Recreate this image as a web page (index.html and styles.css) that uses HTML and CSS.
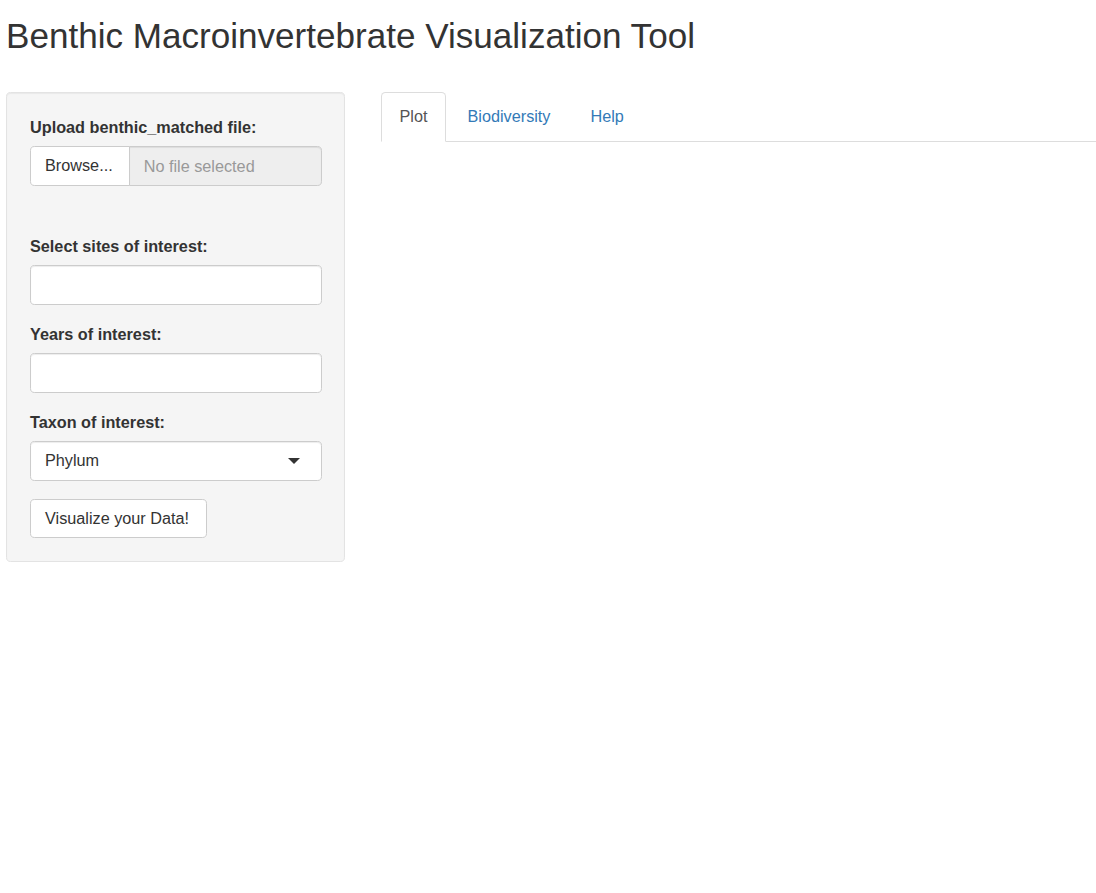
FILE: index.html
```html
<!DOCTYPE html>
<html lang="en">
<head>
<meta charset="utf-8">
<title>Benthic Macroinvertebrate Visualization Tool</title>
<link rel="stylesheet" href="styles.css">
</head>
<body>
<div class="page">
  <h2 class="title">Benthic Macroinvertebrate Visualization Tool</h2>
  <div class="layout">
    <form class="well">
      <div class="form-group file-group">
        <label class="control-label">Upload benthic_matched file:</label>
        <div class="input-group">
          <span class="btn btn-browse">Browse...</span>
          <input type="text" class="form-control file-name" placeholder="No file selected" readonly>
        </div>
      </div>
      <div class="form-group">
        <label class="control-label">Select sites of interest:</label>
        <input type="text" class="form-control">
      </div>
      <div class="form-group">
        <label class="control-label">Years of interest:</label>
        <input type="text" class="form-control">
      </div>
      <div class="form-group">
        <label class="control-label">Taxon of interest:</label>
        <div class="form-control select-input">
          <span class="select-value">Phylum</span>
          <span class="caret"></span>
        </div>
      </div>
      <button type="button" class="btn btn-action">Visualize your Data!</button>
    </form>
    <div class="main">
      <ul class="nav-tabs">
        <li class="active"><a href="#">Plot</a></li>
        <li><a href="#">Biodiversity</a></li>
        <li><a href="#">Help</a></li>
      </ul>
    </div>
  </div>
</div>
</body>
</html>
```
FILE: styles.css
```css
* {
  box-sizing: border-box;
}

html,
body {
  margin: 0;
  background: #fff;
}

body {
  font-family: "Liberation Sans", Arial, Helvetica, sans-serif;
  font-size: 16.24px;
  line-height: 23.2px;
  color: #333;
}

.page {
  padding-left: 6px;
}

.title {
  margin: 17px 0 37px;
  font-size: 35.1px;
  line-height: 38px;
  font-weight: 400;
  color: #333;
}

.layout {
  display: flex;
  align-items: flex-start;
  gap: 36px;
}

.well {
  flex: none;
  width: 339px;
  margin: 0;
  padding: 23px 22px 23px 23px;
  background: #f5f5f5;
  border: 1px solid #e3e3e3;
  border-radius: 4.6px;
  box-shadow: inset 0 1px 1px rgba(0, 0, 0, 0.05);
}

.form-group {
  margin-bottom: 18px;
}

.file-group {
  margin-bottom: 49px;
}

.control-label {
  display: block;
  font-weight: 700;
  line-height: 23px;
  margin-bottom: 7px;
}

.form-control {
  display: block;
  width: 100%;
  height: 40px;
  margin: 0;
  padding: 0 14px;
  border: 1px solid #ccc;
  border-radius: 4.6px;
  background: #fff;
  font: inherit;
  color: #333;
  box-shadow: inset 0 1px 1px rgba(0, 0, 0, 0.075);
  outline: none;
}

.input-group {
  display: flex;
  height: 40px;
}

.btn {
  display: inline-flex;
  align-items: center;
  padding: 0 14px;
  border: 1px solid #ccc;
  border-radius: 4.6px;
  background: #fff;
  color: #333;
  font: inherit;
  line-height: 23.2px;
  white-space: nowrap;
  cursor: pointer;
}

.btn-browse {
  height: 40px;
  padding: 0 16px 0 14px;
  border-radius: 4.6px 0 0 4.6px;
  position: relative;
  z-index: 1;
}

.file-name {
  flex: 1;
  width: auto;
  min-width: 0;
  margin-left: -1px;
  border-radius: 0 4.6px 4.6px 0;
  background: #eee;
}

.file-name::placeholder {
  color: #999;
  opacity: 1;
}

.select-input {
  display: flex;
  align-items: center;
  justify-content: space-between;
  padding: 0 21px 0 14px;
}

.caret {
  width: 0;
  height: 0;
  border-left: 6px solid transparent;
  border-right: 6px solid transparent;
  border-top: 6px solid #333;
}

.btn-action {
  height: 39px;
  padding: 0 17px 0 14px;
}

.main {
  flex: 1;
  min-width: 0;
}

.nav-tabs {
  display: flex;
  list-style: none;
  margin: 0;
  padding: 0;
  border-bottom: 1px solid #ddd;
}

.nav-tabs li {
  margin: 0 3px -1px 0;
}

.nav-tabs a {
  display: block;
  padding: 12px 17.5px 13px;
  line-height: 23px;
  border: 1px solid transparent;
  border-radius: 4.6px 4.6px 0 0;
  color: #337ab7;
  text-decoration: none;
}

.nav-tabs .active a {
  color: #555;
  background: #fff;
  border-color: #ddd;
  border-bottom-color: transparent;
}
```
